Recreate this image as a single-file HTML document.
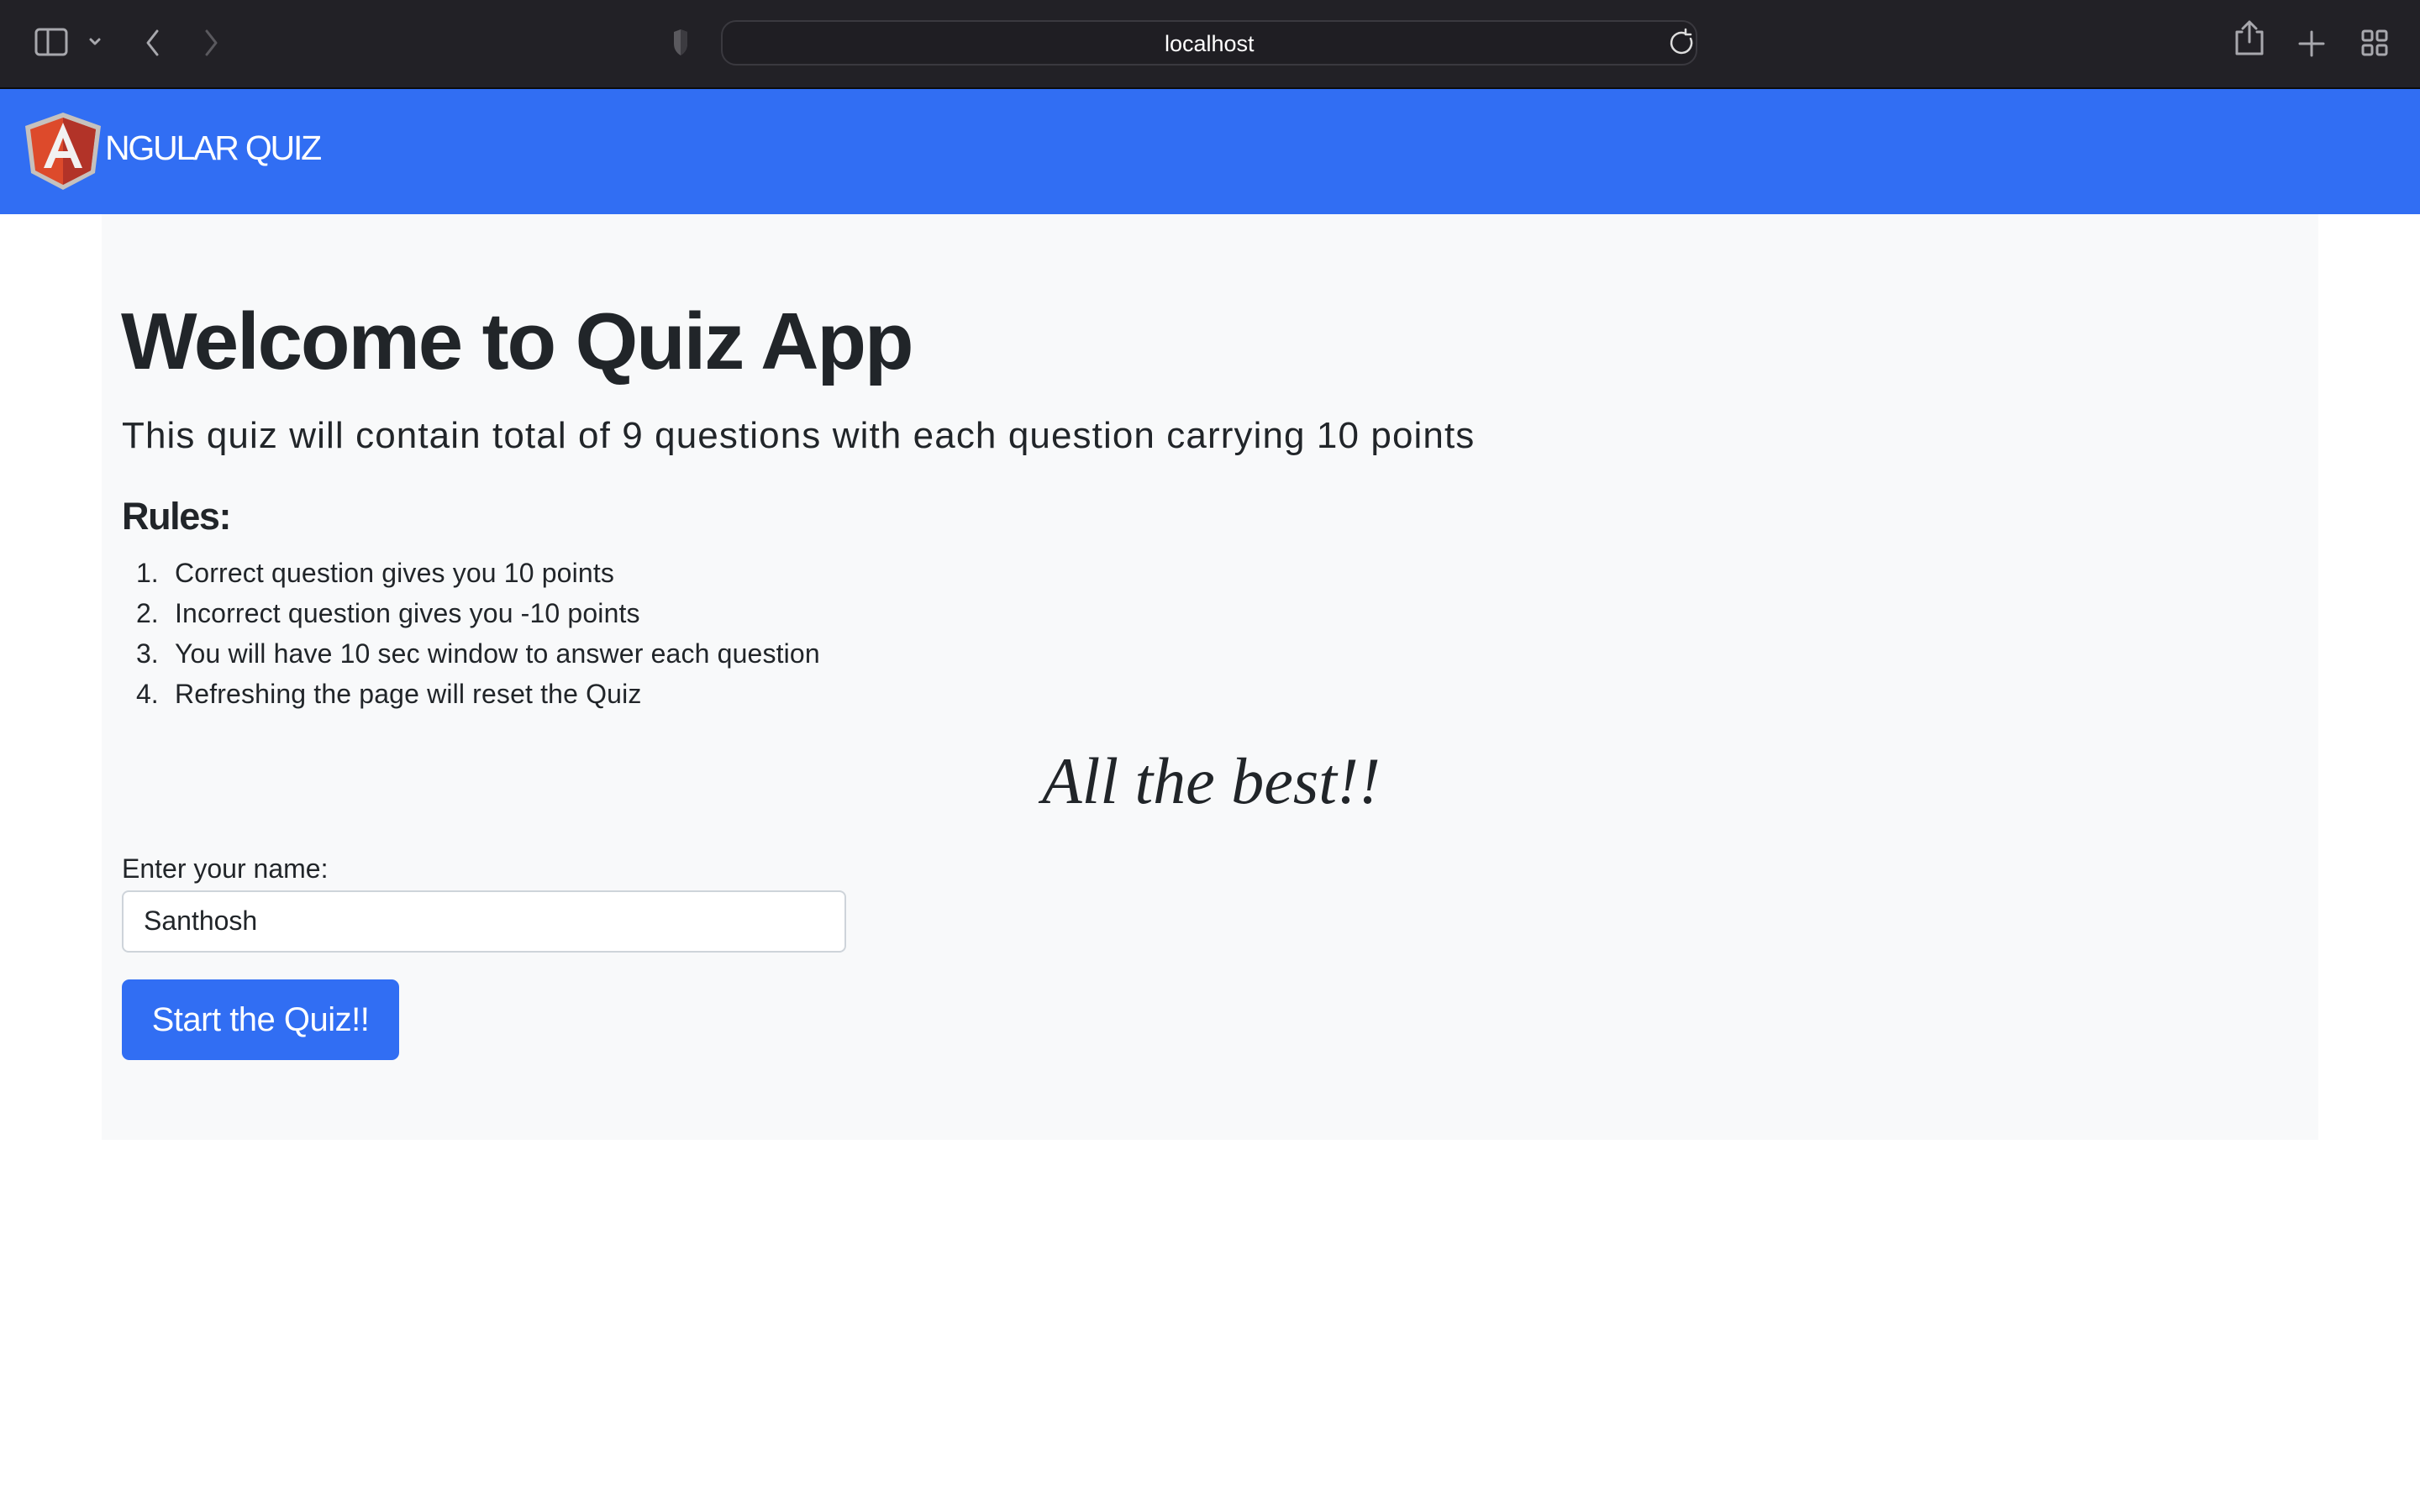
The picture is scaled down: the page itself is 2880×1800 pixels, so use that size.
<!DOCTYPE html>
<html><head><meta charset="utf-8">
<style>
html,body{margin:0;padding:0;width:2880px;height:1800px;background:#fff;overflow:hidden;font-family:"Liberation Sans",sans-serif;color:#212529}
.abs{position:absolute;white-space:nowrap}
#tb{position:absolute;left:0;top:0;width:2880px;height:104px;background:#222126;border-bottom:2px solid #0c0c0d}
#url{position:absolute;left:858px;top:24px;width:1162px;height:54px;border:2px solid #3a393f;border-radius:18px;box-sizing:border-box;background:#1f1e23}
#nav{position:absolute;left:0;top:106px;width:2880px;height:149px;background:#316ef3}
#box{position:absolute;left:121px;top:255px;width:2638px;height:1102px;background:#f8f9fa}
</style></head><body>
<div id="tb"></div>
<div id="url"></div>
<div class="abs" style="left:1386px;top:37px;font-size:27px;color:#fff;">localhost</div>
<svg class="abs" style="left:0;top:0" width="2880" height="104">
 <g fill="none" stroke="#a8a8ad" stroke-width="3" stroke-linecap="round" stroke-linejoin="round">
  <rect x="43" y="35" width="36" height="30" rx="4"/>
  <line x1="57" y1="35" x2="57" y2="65"/>
  <path d="M108 47 l5 5 l5 -5"/>
  <path d="M187 37 l-11 14 l11 14"/>
  <path d="M246 37 l11 14 l-11 14" stroke="#5a595e"/>
  <path d="M2006 40 a12 12 0 1 0 6 6 M2006 35 v6 h6" stroke="#ddd" stroke-width="2.5"/>
  <path d="M2668 38 h-6 v26 h30 v-26 h-6 M2677 26 v24 M2669 34 l8 -8 l8 8"/>
  <path d="M2751 38 v28 M2737 52 h28"/>
  <rect x="2812" y="37" width="11" height="11" rx="2"/><rect x="2829" y="37" width="11" height="11" rx="2"/>
  <rect x="2812" y="54" width="11" height="11" rx="2"/><rect x="2829" y="54" width="11" height="11" rx="2"/>
 </g>
 <path d="M802 38 l8 -3 l8 3 v14 q0 9 -8 14 q-8 -5 -8 -14z" fill="#5a595e"/>
 <path d="M810 35 l8 3 v14 q0 9 -8 14z" fill="#3c3b40"/>
</svg>
<div id="nav"></div>
<svg class="abs" style="left:30px;top:134px" width="90" height="92" viewBox="0 0 90 92">
 <path d="M45 0 L90 16 L83 72 L45 92 L7 72 L0 16Z" fill="#c6c1bd"/>
 <path d="M45 6 L84 20 L78 69 L45 86 L12 69 L6 20Z" fill="#dd4a2b"/>
 <path d="M45 6 L84 20 L78 69 L45 86Z" fill="#b23328"/>
 <path d="M45 12 L22 66 L31 66 L36 54 L54 54 L59 66 L68 66Z M45 30 L51 46 L39 46Z" fill="#f2f2f2" fill-rule="evenodd"/>
</svg>
<div class="abs" style="left:125px;top:153px;font-size:41px;color:#fff;letter-spacing:-2.2px">NGULAR QUIZ</div>
<div id="box"></div>
<div class="abs" style="left:144px;top:352px;font-size:96px;font-weight:bold;letter-spacing:-2.1px;line-height:110px">Welcome to Quiz App</div>
<div class="abs" style="left:145px;top:492px;font-size:44px;letter-spacing:1.1px;line-height:54px">This quiz will contain total of 9 questions with each question carrying 10 points</div>
<div class="abs" style="left:145px;top:588px;font-size:45px;font-weight:bold;line-height:54px;letter-spacing:-1.4px">Rules:</div>
<div class="abs" style="left:162px;top:658px;font-size:32px;line-height:48px">1.<br>2.<br>3.<br>4.</div>
<div class="abs" style="left:208px;top:658px;font-size:32px;line-height:48px;letter-spacing:0.15px">Correct question gives you 10 points<br>Incorrect question gives you -10 points<br>You will have 10 sec window to answer each question<br>Refreshing the page will reset the Quiz</div>
<div class="abs" style="left:1240px;top:880px;width:400px;text-align:center;font-family:'Liberation Serif',serif;font-style:italic;font-size:78px;line-height:100px">All the best!!</div>
<div class="abs" style="left:145px;top:1014px;font-size:32px;line-height:40px">Enter your name:</div>
<div class="abs" style="left:145px;top:1060px;width:862px;height:74px;box-sizing:border-box;border:2px solid #ced4da;border-radius:8px;background:#fff"></div>
<div class="abs" style="left:171px;top:1076px;font-size:32px;line-height:40px">Santhosh</div>
<div class="abs" style="left:145px;top:1166px;width:330px;height:96px;background:#316ef3;border-radius:9px;color:#fff;font-size:40px;line-height:96px;text-align:center;letter-spacing:-0.5px">Start the Quiz!!</div>
</body></html>
